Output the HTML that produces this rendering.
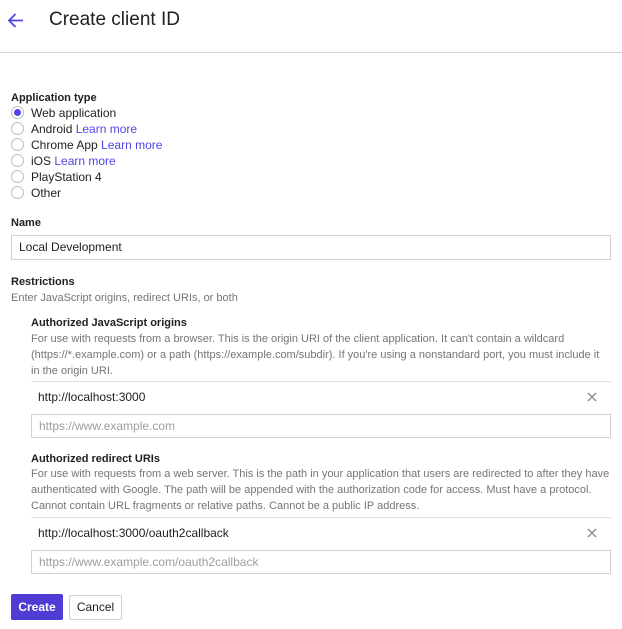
<!DOCTYPE html>
<html><head><meta charset="utf-8"><style>
*{box-sizing:border-box;margin:0;padding:0}
body{width:622px;height:629px;background:#fff;font-family:"Liberation Sans",Arial,sans-serif;color:#212121;position:relative;overflow:hidden}
.a{position:absolute;white-space:nowrap}
.b{font-weight:bold;font-size:11px;color:#212121}
.t{font-size:12px;color:#212121}
.d{font-size:11px;color:#757575;letter-spacing:0}
.l{color:#4f46e5}
.r{position:absolute;left:11px;width:13px;height:13px;border:1px solid #bdbdbd;border-radius:50%}
.in{position:absolute;border:1px solid #d0d0d0;background:#fff}
.hr{position:absolute;height:1px;background:#e0e0e0}
.x{position:absolute}
</style></head><body>
<svg class="a" style="left:7px;top:12px" width="17" height="17" viewBox="0 0 17 17"><path d="M16 8.5H2M8.5 2L2 8.5 8.5 15" fill="none" stroke="#4f46e5" stroke-width="1.8"/></svg>
<div class="a" style="left:49px;top:9px;font-size:19px;color:#212121">Create client ID</div>
<div class="hr" style="left:0;top:52px;width:622px;background:#d6d6d6"></div>

<div class="a b" style="left:11px;top:92px">Application type</div>
<div class="r" style="top:106px;border-color:#bdbdbd"><div style="position:absolute;left:2px;top:2px;width:7px;height:7px;border-radius:50%;background:#4f46e5"></div></div>
<div class="a t" style="left:31px;top:106px">Web application</div>
<div class="r" style="top:122px"></div><div class="a t" style="left:31px;top:122px">Android <span class="l">Learn more</span></div>
<div class="r" style="top:138px"></div><div class="a t" style="left:31px;top:138px">Chrome App <span class="l">Learn more</span></div>
<div class="r" style="top:154px"></div><div class="a t" style="left:31px;top:154px">iOS <span class="l">Learn more</span></div>
<div class="r" style="top:170px"></div><div class="a t" style="left:31px;top:170px">PlayStation 4</div>
<div class="r" style="top:186px"></div><div class="a t" style="left:31px;top:186px">Other</div>

<div class="a b" style="left:11px;top:217px">Name</div>
<div class="in" style="left:11px;top:235px;width:600px;height:25px"></div>
<div class="a t" style="left:19px;top:240px">Local Development</div>

<div class="a b" style="left:11px;top:276px">Restrictions</div>
<div class="a d" style="left:11px;top:292px">Enter JavaScript origins, redirect URIs, or both</div>

<div class="a b" style="left:31px;top:317px">Authorized JavaScript origins</div>
<div class="a d" style="left:31px;top:331px;line-height:16px">For use with requests from a browser. This is the origin URI of the client application. It can't contain a wildcard<br>(https://*.example.com) or a path (https://example.com/subdir). If you're using a nonstandard port, you must include it<br>in the origin URI.</div>
<div class="hr" style="left:31px;top:381px;width:580px"></div>
<div class="a t" style="left:38px;top:390px">http://localhost:3000</div>
<svg class="x" style="left:587px;top:392px" width="10" height="10" viewBox="0 0 10 10"><path d="M1 1L9 9M9 1L1 9" stroke="#8a8a8a" stroke-width="1.3"/></svg>
<div class="in" style="left:31px;top:414px;width:580px;height:24px"></div>
<div class="a t" style="left:39px;top:419px;color:#9e9e9e">https://www.example.com</div>

<div class="a b" style="left:31px;top:453px">Authorized redirect URIs</div>
<div class="a d" style="left:31px;top:466px;line-height:16px">For use with requests from a web server. This is the path in your application that users are redirected to after they have<br>authenticated with Google. The path will be appended with the authorization code for access. Must have a protocol.<br>Cannot contain URL fragments or relative paths. Cannot be a public IP address.</div>
<div class="hr" style="left:31px;top:517px;width:580px"></div>
<div class="a t" style="left:38px;top:526px">http://localhost:3000/oauth2callback</div>
<svg class="x" style="left:587px;top:528px" width="10" height="10" viewBox="0 0 10 10"><path d="M1 1L9 9M9 1L1 9" stroke="#8a8a8a" stroke-width="1.3"/></svg>
<div class="in" style="left:31px;top:550px;width:580px;height:24px"></div>
<div class="a t" style="left:39px;top:555px;color:#9e9e9e">https://www.example.com/oauth2callback</div>

<div class="a" style="left:11px;top:594px;width:52px;height:26px;background:#4f3cd4;border-radius:2px;color:#fff;font-weight:bold;font-size:12px;text-align:center;line-height:26px">Create</div>
<div class="a" style="left:69px;top:595px;width:53px;height:25px;border:1px solid #d0d0d0;border-radius:2px;color:#212121;font-size:12px;text-align:center;line-height:23px">Cancel</div>
</body></html>
